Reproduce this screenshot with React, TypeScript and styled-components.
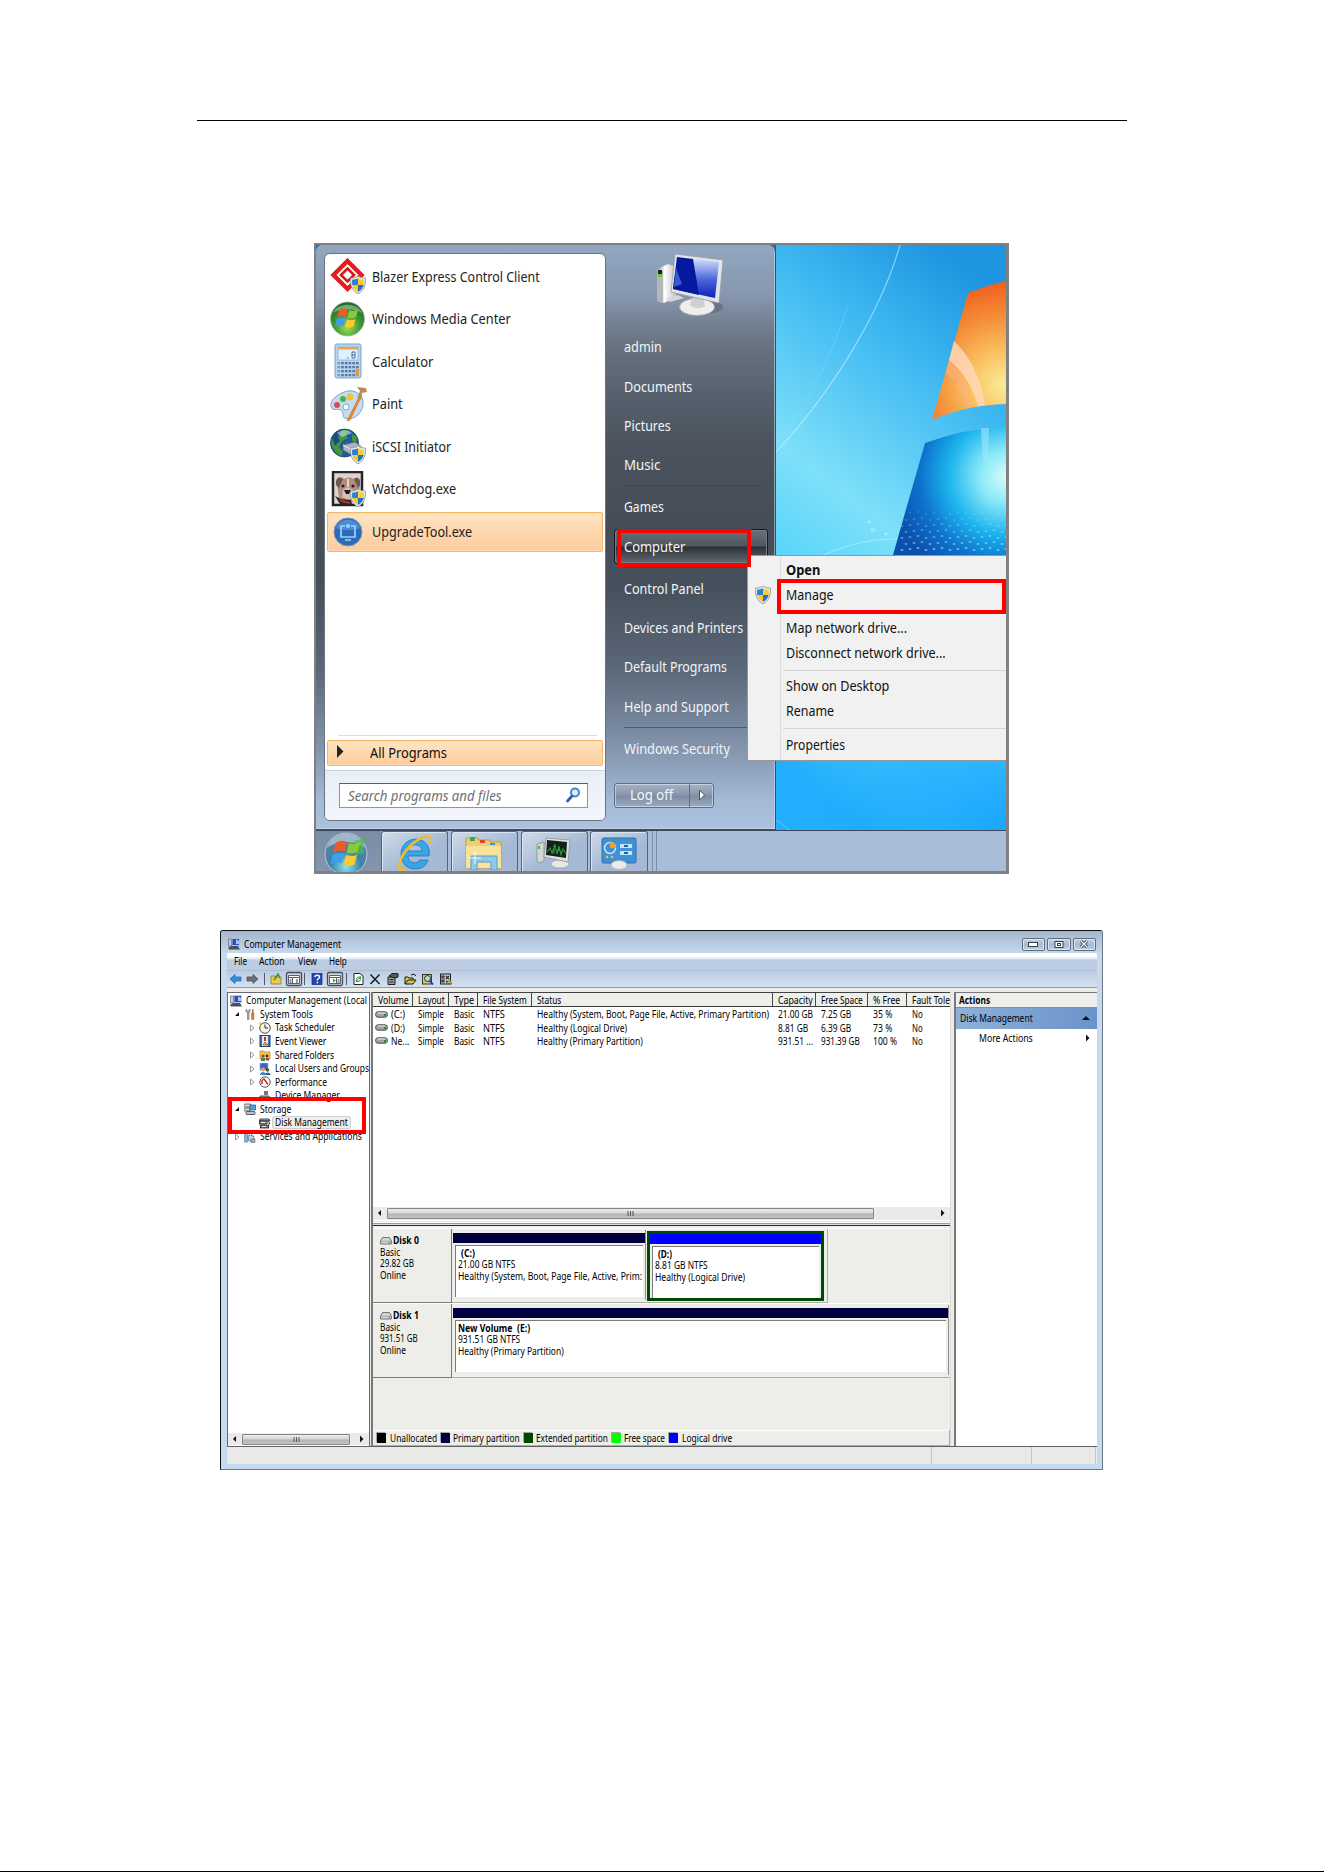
import React, { useLayoutEffect, useRef, useState } from 'react';
import styled, { createGlobalStyle, css } from 'styled-components';

const GlobalStyle = createGlobalStyle`
  * { box-sizing: border-box; }
  body {
    margin: 0;
    background: #fff;
    font-family: 'Noto Sans', 'Open Sans', sans-serif;
    color: #111;
  }
  svg { display: block; flex: none; }
`;

const Page = styled.main`
  width: 1324px;
  height: 1872px;
  display: flex;
  flex-direction: column;
  padding-top: 120px;
  overflow: hidden;
`;

const HeaderRule = styled.div`
  width: 930px;
  height: 1px;
  flex: none;
  margin-left: 197px;
  background: #000;
`;

const FooterRule = styled.div`
  height: 1px;
  margin-top: auto;
  background: #000;
`;

/* ---------- text squeezed to a known width ---------- */

const FitBox = styled.span`
  display: inline-block;
  flex: none;
  white-space: nowrap;
`;

const FitText = styled.span`
  display: inline-block;
  transform-origin: left center;
  white-space: pre;
`;

interface IFitProps {
  w: number;
  children: string;
}

function Fit({ w, children }: IFitProps) {
  const ref = useRef<HTMLSpanElement>(null);
  const [scale, setScale] = useState(1);

  useLayoutEffect(() => {
    if (ref.current) setScale(w / ref.current.offsetWidth);
  }, [w, children]);

  return (
    <FitBox style={{ width: w }}>
      <FitText ref={ref} style={{ transform: `scaleX(${scale})` }}>
        {children}
      </FitText>
    </FitBox>
  );
}

/* ---------- icons ---------- */

interface IIconProps {
  size?: number;
}

function ShieldShape() {
  return (
    <g>
      <path d="M8 0C10 1.4 13 2 15.5 2C16 9 14 14.500 8 18C2 14.500 0 9 .5 2C3 2 6 1.400 8 0Z" fill="#e4e7ea" stroke="#8c9296" strokeWidth=".8" />
      <path d="M8 2.200V9H2.300C2 7 2 5 2.100 3.700C4.500 3.500 6.500 3 8 2.200Z" fill="#2f7fd6" />
      <path d="M8 2.200V9H13.700C14 7 14 5 13.900 3.700C11.500 3.500 9.500 3 8 2.200Z" fill="#fbd02c" />
      <path d="M8 9V16C5 14 3 12 2.300 9Z" fill="#fbc81e" />
      <path d="M8 9V16C11 14 13 12 13.700 9Z" fill="#2370c8" />
    </g>
  );
}

function ShieldIcon() {
  return (
    <svg width="16" height="18" viewBox="0 0 16 18"><ShieldShape /></svg>
  );
}

function FlagShape() {
  return (
    <g>
      <path d="M9 9C12 7 15 7 17.500 8.500L16 16C13 14.500 10 15 7 16.500Z" fill="#f0592a" />
      <path d="M19 9C22 10.500 25 10 28 8.500L26 16C23 17.500 20 17.500 17.500 16.500Z" fill="#8cc83c" />
      <path d="M6.500 18C9.500 16.500 12.500 16.500 15.500 18L13.500 25C11 23.500 8 24 5 25.500Z" fill="#3fa0e8" />
      <path d="M17 18.500C20 19.500 23 19.500 25.500 18L23.500 25.500C21 27 18 27 15 25.500Z" fill="#fccb2c" />
    </g>
  );
}

function BlazerIcon() {
  return (
    <svg width="36" height="36" viewBox="0 0 36 36">
      <path d="M17.500 3L31.500 17L17.500 31L3.500 17Z" fill="none" stroke="#e0201c" strokeWidth="4.400" />
      <path d="M17.500 10.500L24 17L17.500 23.500L11 17Z" fill="none" stroke="#d81818" strokeWidth="2.600" />
      <path d="M17.500 14.500L20 17L17.500 19.500L15 17Z" fill="#fff" />
      <g transform="translate(20 18)"><ShieldShape /></g>
    </svg>
  );
}

function MediaCenterIcon() {
  return (
    <svg width="36" height="36" viewBox="0 0 36 36">
      <defs>
        <radialGradient id="wmc" cx=".5" cy=".75" r=".75">
          <stop offset="0" stopColor="#9be05c" />
          <stop offset=".5" stopColor="#3f9a34" />
          <stop offset="1" stopColor="#1e6425" />
        </radialGradient>
      </defs>
      <circle cx="17.500" cy="18" r="17" fill="url(#wmc)" stroke="#a9b9a9" strokeWidth=".8" />
      <path d="M3 12C7 1 28 1 32 12C24 7 11 7 3 12Z" fill="#fff" opacity=".35" />
      <FlagShape />
    </svg>
  );
}

function CalculatorIcon() {
  const keys = [0, 1, 2, 3, 4, 5];
  return (
    <svg width="36" height="36" viewBox="0 0 36 36">
      <rect x="5" y="1" width="26" height="34" rx="2" fill="#b7d3f0" stroke="#7fa3cb" />
      <rect x="8" y="4" width="20" height="13" fill="#dff0fd" stroke="#88a9cc" strokeWidth=".7" />
      <rect x="8" y="4" width="20" height="2.500" fill="#f0a545" />
      <path d="M22 9H25V15H22ZM22 12H25M17 15H18.500" fill="none" stroke="#4a6f98" strokeWidth="1" />
      {keys.map((k) => [20, 24, 28, 32].map((y) => (
        <rect key={`${k}-${y}`} x={7.5 + k * 3.7} y={y - 1} width="2.600" height="2.300" fill={k === 0 ? '#7f9cbd' : '#56789f'} />
      )))}
      <rect x="25.500" y="26" width="3.500" height="7" fill="#ee9430" />
    </svg>
  );
}

function PaintIcon() {
  return (
    <svg width="38" height="36" viewBox="0 0 38 36">
      <path d="M12 7C21 2 31 6 33 15C34 25 26 35 15 32C11 31 15 26 11 24C7 22 2 26 1 20C0 14 6 10 12 7ZM16 18A3 3 0 1 0 16 24A3 3 0 1 0 16 18Z" fill="#c3dcf2" stroke="#7da4cc" fillRule="evenodd" />
      <circle cx="7" cy="19" r="3" fill="#e04b44" />
      <circle cx="13" cy="13" r="3" fill="#4eb04c" />
      <circle cx="20" cy="11" r="3.500" fill="#f1c330" />
      <path d="M28 13L32 9L20 34L17 35Z" fill="#ef8a2c" stroke="#c9691a" strokeWidth=".6" />
      <path d="M27 12L30 5L27 1L36 2L37 6L32 7L31 14Z" fill="#b98d55" />
    </svg>
  );
}

function GlobeIcon() {
  return (
    <svg width="36" height="36" viewBox="0 0 36 36">
      <circle cx="14.500" cy="15" r="14" fill="#2459a0" stroke="#163f70" strokeWidth=".8" />
      <path d="M5 6C9 1 15 1 19 3L16 7L18 10L12 13L9 19L13 24L11 28C4 25 0 17 2 10ZM22 6L27 9L26 15L22 13Z" fill="#3f9a34" />
      <path d="M2 10C4 5 8 2 12 2L8 9L10 13L5 18Z" fill="#1c4c8c" />
      <path d="M7 5C11 2 17 1 22 5L12 9Z" fill="#dff4ff" opacity=".5" />
      <path d="M13 17L25 14L31 18V24L20 26L13 22Z" fill="#a8b3bc" stroke="#5d6870" strokeWidth=".8" />
      <path d="M13 17L20 21L31 18" fill="none" stroke="#eef2f5" />
      <g transform="translate(20 18)"><ShieldShape /></g>
    </svg>
  );
}

function WatchdogIcon() {
  return (
    <svg width="36" height="36" viewBox="0 0 36 36">
      <rect x="3" y="1" width="29" height="33" fill="#ddd6d0" stroke="#26262a" strokeWidth="2.500" />
      <path d="M7 12C6 5 12 5 14 8C18 6 22 6 23 8C27 5 31 8 30 14L28 26L20 31L9 28Z" fill="#b08d7e" />
      <path d="M6 14C5 7 9 5 13 8L9 17ZM30 14C31 7 27 5 24 8L28 17Z" fill="#71564c" />
      <path d="M13 19L17 16L23 19V27L18 29L12 26Z" fill="#d9bfb2" />
      <path d="M17 8L19 8L19 16L17 16Z" fill="#e4d0c6" />
      <circle cx="13" cy="15" r="1.600" fill="#222" />
      <circle cx="23" cy="15" r="1.600" fill="#222" />
      <path d="M14 19H21L19 23H16Z" fill="#1b1b1d" />
      <path d="M5 25L10 33H22L21 29L11 28Z" fill="#26262b" />
      <path d="M9 28L20 31V33L11 31Z" fill="#c02c2c" />
      <g transform="translate(20 18)"><ShieldShape /></g>
    </svg>
  );
}

function UpgradeIcon() {
  return (
    <svg width="36" height="36" viewBox="0 0 36 36">
      <circle cx="18" cy="18" r="14" fill="#2a6ab6" stroke="#7c98b8" strokeWidth="1" />
      <path d="M6 14C9 3 27 3 30 14C23 17 13 17 6 14Z" fill="#5b9de0" opacity=".7" />
      <path d="M15 12H11V23H25V12H21M15 26H21" fill="none" stroke="#9bd2ff" strokeWidth="1.700" />
      <circle cx="18" cy="12" r="2" fill="#9bd2ff" />
    </svg>
  );
}

function SearchIcon() {
  return (
    <svg width="15" height="16" viewBox="0 0 15 16">
      <circle cx="9" cy="5.500" r="4" fill="#dcebfa" stroke="#4585c6" strokeWidth="2" />
      <path d="M6 9L1.500 14" stroke="#2b64ab" strokeWidth="2.800" strokeLinecap="round" />
    </svg>
  );
}

function ComputerPicture() {
  return (
    <svg width="68" height="63" viewBox="0 0 68 63">
      <defs>
        <linearGradient id="scr" x1="0" y1="1" x2="0" y2="0">
          <stop offset="0" stopColor="#0c22b8" />
          <stop offset=".45" stopColor="#4a66dc" />
          <stop offset="1" stopColor="#dde9ff" />
        </linearGradient>
        <linearGradient id="tower" x1="0" x2="1">
          <stop offset="0" stopColor="#8e8e8e" />
          <stop offset=".4" stopColor="#fff" />
          <stop offset="1" stopColor="#c2c2c2" />
        </linearGradient>
      </defs>
      <ellipse cx="50" cy="53" rx="17" ry="7" fill="#4e5c6e" opacity=".5" />
      <path d="M1 15L12 10L20 13V43L8 49L1 47Z" fill="url(#tower)" />
      <path d="M1 15L7 17V49L1 47Z" fill="#b4b7b8" />
      <rect x="2" y="16" width="4" height="5" fill="#222" />
      <rect x="2" y="20" width="4" height="3" fill="#58d026" />
      <path d="M10 45L22 41L28 44L14 48Z" fill="#d6d6d6" />
      <ellipse cx="41" cy="53" rx="17.500" ry="8.500" fill="#eee" stroke="#aaa" strokeWidth=".8" />
      <path d="M36 44H47L49 52C45 55 38 55 34 51Z" fill="#cfcfcf" />
      <path d="M19 0L67 6L63 49L15 38Z" fill="#e2e5e6" stroke="#9a9fa4" strokeWidth=".8" />
      <path d="M21 3L63 8L59 44L17 35Z" fill="url(#scr)" />
      <path d="M21 3L37 5L43 41L17 35Z" fill="#0618a0" />
      <path d="M20 14L26 30L18 33Z" fill="#5276e0" opacity=".7" />
    </svg>
  );
}

function Wallpaper() {
  const dots: React.ReactElement[] = [];
  for (let r = 0; r < 7; r += 1) {
    for (let c = 0; c < 14; c += 1) {
      dots.push(<ellipse key={`${r}-${c}`} cx={126 + c * 8 + (r % 2) * 4} cy={269 + r * 6 - (c % 3)} rx="1.500" ry="1" fill="#bdeaff" opacity={0.15 + r * 0.07} />);
    }
  }
  return (
    <svg width="230" height="585" viewBox="0 0 230 585">
      <defs>
        <linearGradient id="sky" x1=".7" y1="0" x2=".4" y2="1">
          <stop offset="0" stopColor="#1f94e0" />
          <stop offset=".2" stopColor="#3db7f1" />
          <stop offset=".36" stopColor="#5fcdf6" />
          <stop offset=".5" stopColor="#7ee0f9" />
          <stop offset=".72" stopColor="#4fd2fb" />
          <stop offset="1" stopColor="#22aefc" />
        </linearGradient>
        <radialGradient id="orange" gradientUnits="userSpaceOnUse" cx="228" cy="140" r="115">
          <stop offset="0" stopColor="#fbec98" />
          <stop offset=".3" stopColor="#f9c060" />
          <stop offset=".62" stopColor="#f58a35" />
          <stop offset="1" stopColor="#ef4e16" />
        </radialGradient>
        <radialGradient id="blue" gradientUnits="userSpaceOnUse" cx="230" cy="232" r="115">
          <stop offset="0" stopColor="#d9fbfb" />
          <stop offset=".22" stopColor="#8ceaf8" />
          <stop offset=".5" stopColor="#1cb4ee" />
          <stop offset=".75" stopColor="#0d72cc" />
          <stop offset="1" stopColor="#0a50ac" />
        </radialGradient>
        <radialGradient id="corner" gradientUnits="userSpaceOnUse" cx="230" cy="585" r="180">
          <stop offset="0" stopColor="#1ba6ff" />
          <stop offset="1" stopColor="#1ba6ff" stopOpacity="0" />
        </radialGradient>
      </defs>
      <rect width="230" height="585" fill="url(#sky)" />
      <rect y="400" width="230" height="185" fill="url(#corner)" />
      <path d="M124 0C108 56 66 136 0 207" fill="none" stroke="#c9f0fd" strokeWidth="1.200" opacity=".6" />
      <path d="M72 60C56 110 30 165 0 198" fill="none" stroke="#b4e8fc" strokeWidth=".8" opacity=".3" />
      <path d="M0 575L14 585" stroke="#9be8ff" opacity=".5" />
      <path d="M45 311C75 298 100 293 125 294" fill="none" stroke="#b8effc" strokeWidth="1" opacity=".7" />
      <path d="M192 48Q212 40 230 36V159Q190 160 156 175Z" fill="url(#orange)" />
      <path d="M178 96Q203 120 209 160L202 161Q194 132 173 115Z" fill="#ffd9bd" opacity=".8" />
      <path d="M173 115Q192 132 197 162L190 163Q185 142 170 128Z" fill="#fbb37c" opacity=".6" />
      <path d="M149 198Q190 183 230 182V310H117Z" fill="url(#blue)" />
      <path d="M205 183H213L212 220L207 215Z" fill="#9fe6fb" opacity=".6" />
      {dots}
      <circle cx="93" cy="277" r="1.500" fill="#b7effc" opacity=".8" />
      <circle cx="97" cy="285" r="2.500" fill="#a3e9fc" opacity=".8" />
      <circle cx="110" cy="289" r="1.600" fill="#b7effc" opacity=".8" />
    </svg>
  );
}

function OrbIcon() {
  return (
    <svg width="46" height="41" viewBox="0 0 46 41">
      <defs>
        <radialGradient id="orb" cx=".5" cy=".8" r=".8">
          <stop offset="0" stopColor="#8fe4f4" />
          <stop offset=".45" stopColor="#3c83a8" />
          <stop offset="1" stopColor="#6d8299" />
        </radialGradient>
      </defs>
      <circle cx="22" cy="23" r="21" fill="url(#orb)" stroke="#c5d4e2" strokeWidth=".8" />
      <path d="M3 17C8 -2 36 -2 41 17C31 9 13 9 3 17Z" fill="#e0edf5" opacity=".5" />
      <path d="M30 10L44 6L39 14L40 22L32 24Z" fill="#4cbc4e" opacity=".7" />
      <g transform="translate(0 0) scale(1.300)"><FlagShape /></g>
    </svg>
  );
}

function IeIcon() {
  return (
    <svg width="36" height="38" viewBox="0 0 36 38">
      <path d="M31 26H23C18 32 11 28 11 22H32C34 12 27 5 19 5C10 5 4 12 4 20C4 29 10 35 18 35C25 35 29 32 31 26ZM11 17C12 9 25 9 25 17Z" fill="#39a4e6" stroke="#1b76bd" strokeWidth=".8" />
      <path d="M33 10C35 5 33 1 27 3C18 6 6 17 3 28C1 34 3 37 8 35" fill="none" stroke="#f4b92c" strokeWidth="2.600" />
    </svg>
  );
}

function FolderIcon() {
  return (
    <svg width="38" height="34" viewBox="0 0 38 34">
      <path d="M1 8V2H13V4H25V6H36V32H1Z" fill="#efce78" stroke="#c69a3c" />
      <path d="M5 1H10V5H5Z" fill="#3fa84d" />
      <path d="M15 4H20V7H15Z" fill="#d64b2c" />
      <path d="M25 7H30V9H25Z" fill="#3597d8" />
      <path d="M1 10H36V32H1Z" fill="#f9e29c" />
      <path d="M6 34V20H32V34H26V26H12V34Z" fill="#8ccbee" stroke="#4e9fce" />
      <path d="M10 16V28M4 22H16" stroke="#fff" strokeWidth="1" opacity=".9" />
    </svg>
  );
}

function MonitorIcon() {
  return (
    <svg width="36" height="32" viewBox="0 0 36 32">
      <path d="M1 7L8 5V24L3 26L1 24Z" fill="#d4d6d6" stroke="#7d8488" strokeWidth=".7" />
      <rect x="2" y="9" width="2" height="3" fill="#3bbf35" />
      <ellipse cx="24" cy="27" rx="9" ry="4" fill="#e7e9e9" stroke="#9b9fa2" strokeWidth=".6" />
      <path d="M10 1L34 3L32 25L8 20Z" fill="#dfe2e3" stroke="#858a8e" strokeWidth=".7" />
      <path d="M11 3L31 5L30 21L10 18Z" fill="#16201a" />
      <path d="M11 15L14 11L16 16L19 8L21 17L23 9L25 18L27 12L30 17M18 8V17M22 12L25 15" fill="none" stroke="#2a9c38" strokeWidth="1.100" />
    </svg>
  );
}

function PanelIcon() {
  return (
    <svg width="36" height="33" viewBox="0 0 36 33">
      <rect x="1" y="1" width="34" height="25" rx="1.500" fill="#3f91d4" stroke="#2a6fae" />
      <circle cx="9" cy="11" r="5.500" fill="none" stroke="#c5e2f8" strokeWidth="1.500" />
      <path d="M9 11V5A6 6 0 0 1 15 11Z" fill="#f59a2e" />
      <rect x="19" y="7" width="12" height="4" fill="#bfe4fb" />
      <rect x="19" y="14" width="12" height="4" fill="#bfe4fb" />
      <path d="M23 9H27M23 16H27" stroke="#1c63a8" strokeWidth="2" />
      <circle cx="6" cy="20" r="1.300" fill="#f7b44a" />
      <circle cx="11" cy="20" r="1.300" fill="#f7b44a" />
      <ellipse cx="18" cy="28" rx="8" ry="4.500" fill="#e8eaeb" stroke="#a4a8ab" strokeWidth=".7" />
    </svg>
  );
}

function ConsoleIcon({ size = 12 }: IIconProps) {
  return (
    <svg width={size} height={size} viewBox="0 0 12 12">
      <rect x="4" y=".5" width="7.500" height="7" fill="#2b4fc0" stroke="#c3ccd8" strokeWidth=".8" />
      <path d="M8 1.200L11 3V6H8Z" fill="#a8c8ff" />
      <rect x=".5" y="1" width="3" height="7" fill="#c8ccd0" stroke="#445" strokeWidth=".5" />
      <path d="M0 10L3 8H10L12 11.500H1Z" fill="#4a505a" />
    </svg>
  );
}

function ToolsIcon() {
  return (
    <svg width="12" height="12" viewBox="0 0 12 12">
      <path d="M2 1V3.500L3.500 5V11.500H5V5L6 3.500V1L5 3H3Z" fill="#a8adb2" stroke="#555" strokeWidth=".5" />
      <path d="M8 1H9.500V5H8Z" fill="#888" />
      <path d="M7.500 5H10V11.500H7.500Z" fill="#f07c28" stroke="#b04a10" strokeWidth=".4" />
    </svg>
  );
}

function ClockIcon() {
  return (
    <svg width="12" height="12" viewBox="0 0 12 12">
      <circle cx="6" cy="6" r="5.300" fill="#f4f1e4" stroke="#4d5258" strokeWidth="1" />
      <path d="M6 2.500V6H9" fill="none" stroke="#333" />
      <path d="M0 2L2 0V4Z" fill="#e7ac38" />
    </svg>
  );
}

function EventIcon() {
  return (
    <svg width="12" height="12" viewBox="0 0 12 12">
      <rect x="1" y=".5" width="10" height="11" fill="#3b6fc0" stroke="#26406c" />
      <rect x="3" y="1" width="6" height="10" fill="#e8edf5" />
      <path d="M5 2H7V6H5Z" fill="#d22" />
      <path d="M4 10L6 7L9 10Z" fill="#f0b020" stroke="#333" strokeWidth=".5" />
    </svg>
  );
}

function SharedIcon() {
  return (
    <svg width="12" height="12" viewBox="0 0 12 12">
      <path d="M1 2H5L6 3H11V10H1Z" fill="#f2c74c" stroke="#b48520" strokeWidth=".7" />
      <circle cx="4" cy="7" r="1.500" fill="#7a4a28" />
      <path d="M2 12V9H6V12Z" fill="#2f8c50" />
      <circle cx="8" cy="7" r="1.400" fill="#333" />
      <path d="M7 11.500V9H10V11.500Z" fill="#b33c3c" />
    </svg>
  );
}

function UsersIcon() {
  return (
    <svg width="12" height="12" viewBox="0 0 12 12">
      <rect x="1" y="0" width="8" height="7" fill="#3a62c8" stroke="#9fb0c8" strokeWidth=".7" />
      <circle cx="4" cy="6.500" r="2" fill="#dca860" />
      <path d="M1 12C1 8 7 8 7 12Z" fill="#3e8cc0" />
      <circle cx="8.500" cy="7" r="1.700" fill="#62452c" />
      <path d="M6 12C6 8.500 11.500 8.500 11.500 12Z" fill="#2d5f90" />
    </svg>
  );
}

function PerfIcon() {
  return (
    <svg width="12" height="12" viewBox="0 0 12 12">
      <circle cx="6" cy="6" r="5.200" fill="#fff" stroke="#555" strokeWidth="1" />
      <path d="M3 8V4.500L5 3L9 8.500" fill="none" stroke="#d11f1f" strokeWidth="1.400" />
    </svg>
  );
}

function DeviceIcon() {
  return (
    <svg width="12" height="12" viewBox="0 0 12 12">
      <path d="M5 1H9V5H5Z" fill="#777" />
      <path d="M1 6H10L11 10H1Z" fill="#9aa0a6" stroke="#333" strokeWidth=".8" />
    </svg>
  );
}

function StorageIcon() {
  return (
    <svg width="12" height="12" viewBox="0 0 12 12">
      <rect x="0" y="1" width="7" height="3" rx="1" fill="#d8dbde" stroke="#4a4e52" strokeWidth=".8" />
      <rect x="0" y="5" width="6" height="3" rx="1" fill="#d8dbde" stroke="#4a4e52" strokeWidth=".8" />
      <rect x="6" y="2" width="5.500" height="5" fill="#45a6e4" stroke="#24506e" strokeWidth=".7" />
      <rect x="2" y="8.500" width="9" height="3" rx="1" fill="#bcc2c8" stroke="#3b3f43" strokeWidth=".8" />
    </svg>
  );
}

function DiskMgmtIcon() {
  return (
    <svg width="12" height="12" viewBox="0 0 12 12">
      <path d="M1 2H10L11 4H.5Z" fill="#b4b8ba" stroke="#222" strokeWidth=".8" />
      <rect x=".5" y="4" width="10" height="3" fill="#888d90" stroke="#1d1d1d" strokeWidth=".8" />
      <rect x="1.500" y="8" width="8" height="3" fill="#777c80" stroke="#1d1d1d" strokeWidth=".8" />
      <path d="M2 5.500H6M3 9.500H7M8 8L11 4" stroke="#e7e9ea" strokeWidth="1" />
    </svg>
  );
}

function ServicesIcon() {
  return (
    <svg width="12" height="12" viewBox="0 0 12 12">
      <rect x="0" y="1" width="4" height="10" fill="#86b6d8" stroke="#4e7fa2" strokeWidth=".6" />
      <circle cx="7" cy="7" r="3" fill="#c3d3e0" stroke="#587187" strokeWidth="1.300" strokeDasharray="1.500 .8" />
      <rect x="7" y="8" width="4" height="3.500" fill="#9ab" stroke="#567" strokeWidth=".5" />
    </svg>
  );
}

function VolumeIcon() {
  return (
    <svg width="13" height="7" viewBox="0 0 13 7">
      <rect x=".6" y=".8" width="11.800" height="5.400" rx="2.400" fill="#9fa3a2" stroke="#4a4e4d" strokeWidth="1" />
      <path d="M2.500 2H10.500" stroke="#eee" />
      <rect x="9" y="3" width="2" height="2" fill="#1d8f2a" />
    </svg>
  );
}

function DiskIcon() {
  return (
    <svg width="12" height="8" viewBox="0 0 12 8">
      <path d="M2.500 .6H9.500L11.400 4V7H.6V4Z" fill="#d7d9d7" stroke="#5e6260" strokeWidth=".9" />
      <path d="M.6 4.200H11.400" stroke="#8d918f" strokeWidth=".7" />
      <rect x="8.500" y="5" width="1.500" height="1" fill="#2a2" />
    </svg>
  );
}

/* ---------- start menu ---------- */

const Desktop = styled.section`
  position: relative;
  width: 695px;
  height: 631px;
  flex: none;
  margin: 122px 0 0 314px;
  border: solid #808080;
  border-width: 2px 3px 3px 2px;
  display: grid;
  grid-template-rows: 585px 41px;
`;

const Scene = styled.div`
  display: flex;
  background: #1c68b4;
`;

const StartMenu = styled.div`
  width: 460px;
  height: 585px;
  display: flex;
  padding: 8px 0 0 8px;
  border: solid #3f4e60;
  border-width: 0 1px 1px 0;
  border-radius: 6px 7px 0 0;
  box-shadow: inset -1px -1px 0 rgba(205, 220, 238, 0.55);
  background: linear-gradient(#92a7c2 0, #8797ae 50px, #738092 80px, #66717e 105px, #56616d 150px,
    #4b545e 200px, #454d57 280px, #46505c 340px, #5b6878 425px, #8192aa 500px, #a4b9d6 555px, #acc2df 585px);
`;

const ProgramPane = styled.div`
  width: 282px;
  height: 568px;
  display: flex;
  flex-direction: column;
  border: 1px solid #69747f;
  border-radius: 6px;
  overflow: hidden;
  background: #fff;
`;

const ProgramList = styled.div`
  height: 481px;
  padding: 2px 2px 0;
`;

const warmBar = css`
  border: 1px solid #f3b568;
  border-radius: 2px;
  box-shadow: inset 0 0 0 1px #fddcb2;
  background: linear-gradient(#ffe5c3, #fdcb9b);
`;

const Program = styled.div<{ $active?: boolean }>`
  height: 40px;
  margin-bottom: 2.6px;
  display: flex;
  align-items: center;
  gap: 6px;
  padding-left: 2px;
  border: 1px solid transparent;
  font-size: 14px;
  color: #222;
  ${({ $active }) => $active && warmBar}
`;

const ProgramIcon = styled.span`
  width: 36px;
  height: 36px;
`;

const PaneRule = styled.div`
  height: 1px;
  margin: 0 8px 4px 13px;
  background: #cfdfee;
`;

const AllPrograms = styled.div`
  height: 26px;
  flex: none;
  margin: 0 2px;
  display: flex;
  align-items: center;
  gap: 26px;
  padding: 0 0 2px 8px;
  font-size: 14px;
  ${warmBar}
`;

const SearchPane = styled.div`
  height: 50px;
  margin-top: auto;
  flex: none;
  border-top: 1px solid #c9d3df;
  background: linear-gradient(#e9eff8, #f2f5fb);
  padding: 12px 0 0 14px;
`;

const SearchBox = styled.div`
  width: 249px;
  height: 25px;
  display: flex;
  align-items: center;
  justify-content: space-between;
  padding: 0 6px 1px 8px;
  border: 1px solid #8b97a4;
  border-top-color: #565f69;
  background: #fff;
  font-size: 14px;
  font-style: italic;
  color: #6d7074;
`;

const PlacesPane = styled.div`
  flex: 1;
  display: flex;
  flex-direction: column;
  padding-left: 8px;
`;

const Portrait = styled.div`
  height: 74.3px;
  flex: none;
  padding: 1px 0 0 42px;
`;

const Place = styled.div<{ $active?: boolean }>`
  height: 39.2px;
  flex: none;
  display: flex;
  align-items: center;
  margin-right: 7px;
  padding-left: 10px;
  color: #f2f5f8;
  font-size: 14px;
  ${({ $active }) => $active && css`
    height: 35px;
    margin-top: 2.7px;
    margin-bottom: 1.5px;
    border: 1px solid #15191e;
    border-radius: 3px;
    padding-left: 9px;
    box-shadow: inset 0 0 0 1px #757d86;
    background: linear-gradient(#68717b, #4f565f 48%, #2c3137 52%, #626a73);
  `}
`;

const PlaceRule = styled.div`
  height: 3.3px;
  flex: none;
  margin: 0 12px 0 10px;
  padding-top: 1px;

  &::before {
    content: '';
    display: block;
    height: 1px;
    background: #343e49;
    opacity: 0.6;
  }
`;

const LogOff = styled.div`
  display: flex;
  width: 100px;
  height: 25px;
  margin-top: 14.5px;
  border: 1px solid #5f6e80;
  border-radius: 3px;
  background: linear-gradient(#a5b3c6, #8797ab 48%, #7a8ba2 52%, #9aacc4);
  box-shadow: inset 0 0 0 1px rgba(230, 238, 247, 0.55);
  font-size: 14px;
  color: #f5f7fa;
`;

const LogOffText = styled.span`
  width: 75px;
  padding: 1px 0 0 15px;
  border-right: 1px solid #5f6e80;
`;

const LogOffArrow = styled.span`
  flex: 1;
  display: grid;
  place-items: center;
`;

const Taskbar = styled.div`
  display: flex;
  border-top: 1px solid #3b4857;
  background: #a8bdd9;
`;

const StartOrb = styled.div`
  width: 65px;
  padding-left: 8px;
  background: linear-gradient(#7b8da4, #8496ad);
`;

const Task = styled.div<{ $w?: number }>`
  width: ${({ $w = 67 }) => $w}px;
  margin-right: 2.8px;
  height: 40px;
  display: flex;
  justify-content: center;
  align-items: center;
  padding-top: 3px;
  border: 1px solid #54657a;
  border-bottom: 0;
  border-radius: 3px 3px 0 0;
  box-shadow: inset 1px 1px 0 #dce6f2;
  background: linear-gradient(150deg, #cedbea, #a5b9d4 60%);
`;

const TaskEnd = styled.div`
  width: 5px;
  margin-left: 1px;
  border: solid #7b8ca3;
  border-width: 0 1px;
`;

const ContextMenu = styled.div`
  position: absolute;
  left: 431px;
  top: 310px;
  width: 259px;
  height: 206px;
  display: flex;
  border: 1px solid #979797;
  border-right: 0;
  background: #f1f1f1;
  font-size: 14px;
  color: #111;
`;

const MenuGutter = styled.div`
  width: 33px;
  padding: 30px 0 0 6.5px;
  border-right: 1px solid #dcdcdc;
`;

const MenuItems = styled.div`
  flex: 1;
  padding: 2.500px 0 0 2px;
`;

const MenuItem = styled.div<{ $bold?: boolean }>`
  height: 24.6px;
  padding: 0 0 2px 3px;
  display: flex;
  align-items: center;
  font-weight: ${({ $bold }) => ($bold ? 700 : 400)};
`;

const MenuRule = styled.div`
  height: 1px;
  margin: 4px 0 3.9px;
  background: #d5d5d5;
`;

const Marker = styled.div<{ $x: number; $y: number; $w: number; $h: number }>`
  position: absolute;
  left: ${({ $x }) => $x}px;
  top: ${({ $y }) => $y}px;
  width: ${({ $w }) => $w}px;
  height: ${({ $h }) => $h}px;
  border: 4px solid #fe0000;
`;

const programs = [
  { name: 'Blazer Express Control Client', w: 168, icon: <BlazerIcon /> },
  { name: 'Windows Media Center', w: 139, icon: <MediaCenterIcon /> },
  { name: 'Calculator', w: 61, icon: <CalculatorIcon /> },
  { name: 'Paint', w: 31, icon: <PaintIcon /> },
  { name: 'iSCSI Initiator', w: 79, icon: <GlobeIcon /> },
  { name: 'Watchdog.exe', w: 84, icon: <WatchdogIcon /> },
  { name: 'UpgradeTool.exe', w: 100, icon: <UpgradeIcon />, active: true },
];

const places = [
  { name: 'admin', w: 38 },
  { name: 'Documents', w: 68 },
  { name: 'Pictures', w: 47 },
  { name: 'Music', w: 36 },
  null,
  { name: 'Games', w: 40 },
  { name: 'Computer', w: 61, active: true },
  null,
  { name: 'Control Panel', w: 80 },
  { name: 'Devices and Printers', w: 119 },
  { name: 'Default Programs', w: 103 },
  { name: 'Help and Support', w: 105 },
  null,
  { name: 'Windows Security', w: 106 },
];

const menuItems = [
  { name: 'Open', w: 34, bold: true },
  { name: 'Manage', w: 48 },
  null,
  { name: 'Map network drive...', w: 121 },
  { name: 'Disconnect network drive...', w: 160 },
  null,
  { name: 'Show on Desktop', w: 103 },
  { name: 'Rename', w: 48 },
  null,
  { name: 'Properties', w: 59 },
];

function StartMenuShot() {
  return (
    <Desktop>
      <Scene>
        <StartMenu>
          <ProgramPane>
            <ProgramList>
              {programs.map((p) => (
                <Program key={p.name} $active={p.active}>
                  <ProgramIcon>{p.icon}</ProgramIcon>
                  <Fit w={p.w}>{p.name}</Fit>
                </Program>
              ))}
            </ProgramList>
            <PaneRule />
            <AllPrograms>
              <svg width="8" height="14" viewBox="0 0 8 14"><path d="M1 0L7.500 6.500L1 13Z" fill="#222" /></svg>
              <Fit w={77}>All Programs</Fit>
            </AllPrograms>
            <SearchPane>
              <SearchBox>
                <Fit w={153}>Search programs and files</Fit>
                <SearchIcon />
              </SearchBox>
            </SearchPane>
          </ProgramPane>
          <PlacesPane>
            <Portrait><ComputerPicture /></Portrait>
            {places.map((p, i) => (p ? (
              <Place key={p.name} $active={p.active}>
                <Fit w={p.w}>{p.name}</Fit>
              </Place>
            ) : <PlaceRule key={`rule-${i}`} />))}
            <LogOff>
              <LogOffText><Fit w={43}>Log off</Fit></LogOffText>
              <LogOffArrow>
                <svg width="8" height="12" viewBox="0 0 8 12"><path d="M1.500 1L6.500 6L1.500 11Z" fill="#fff" stroke="#46525f" /></svg>
              </LogOffArrow>
            </LogOff>
          </PlacesPane>
        </StartMenu>
        <Wallpaper />
      </Scene>
      <Taskbar>
        <StartOrb><OrbIcon /></StartOrb>
        <Task><IeIcon /></Task>
        <Task><FolderIcon /></Task>
        <Task><MonitorIcon /></Task>
        <Task $w={58}><PanelIcon /></Task>
        <TaskEnd />
      </Taskbar>
      <ContextMenu>
        <MenuGutter><ShieldIcon /></MenuGutter>
        <MenuItems>
          {menuItems.map((m, i) => (m ? (
            <MenuItem key={m.name} $bold={m.bold}><Fit w={m.w}>{m.name}</Fit></MenuItem>
          ) : <MenuRule key={`rule-${i}`} />))}
        </MenuItems>
      </ContextMenu>
      <Marker $x={301} $y={284} $w={134} $h={38} />
      <Marker $x={461} $y={334} $w={229} $h={35} />
    </Desktop>
  );
}

/* ---------- computer management ---------- */

const Win = styled.section`
  position: relative;
  width: 883px;
  height: 540px;
  flex: none;
  margin: 56px 0 0 220px;
  padding: 0 5px 5px 6px;
  border: 1px solid #101418;
  border-right-color: #6d7680;
  border-bottom-color: #6d7680;
  border-radius: 3px 3px 0 0;
  background: #c6d9ee;
  display: flex;
  flex-direction: column;
  font-size: 10px;
  color: #000;
`;

const TitleBar = styled.div`
  height: 22px;
  margin: 0 -5px 0 -6px;
  padding: 5px 6px 0 7px;
  display: flex;
  align-items: center;
  gap: 3.5px;
  border-radius: 3px 3px 0 0;
  background: linear-gradient(#a3b5ca, #b5c8df 50%, #c6d8ec);
`;

const WinButtons = styled.div`
  display: flex;
  gap: 2px;
  margin-left: auto;
`;

const WinButton = styled.div`
  width: 23.5px;
  height: 13px;
  display: grid;
  place-items: center;
  border: 1px solid #5e6c7d;
  border-radius: 2px;
  box-shadow: inset 0 0 0 1px #dbe6f2;
  background: linear-gradient(#c3d2e4, #a9bbd0 50%, #bccde0);
`;

const MenuBar = styled.div`
  height: 17px;
  display: flex;
  align-items: center;
  padding-left: 7px;
  background: linear-gradient(#fff 0, #fff 3px, #dde6f3 6px, #bccce3 7px);
`;

const MenuName = styled.span<{ $w: number }>`
  width: ${({ $w }) => $w}px;
`;

const ToolBar = styled.div`
  height: 18px;
  display: flex;
  align-items: center;
  padding-left: 3px;
  border-top: 1px solid #b0bed4;
  border-bottom: 1px solid #8d9cb0;
  background: linear-gradient(#bccce4, #d3e0f0);
`;

const Panes = styled.div`
  height: 459px;
  display: flex;
  padding-top: 4px;
  background: #ecede9;
`;

const TreePane = styled.div`
  width: 143px;
  display: flex;
  flex-direction: column;
  padding-top: 1px;
  overflow: hidden;
  border: solid #666b70;
  border-width: 1px 1px 0 1px;
  background: #fff;
`;

const TreeRow = styled.div<{ $indent: number }>`
  height: 13.59px;
  flex: none;
  display: flex;
  align-items: center;
  padding-left: ${({ $indent }) => $indent}px;
`;

const Twisty = styled.span`
  width: 11px;
  flex: none;
`;

const TreeText = styled.span<{ $selected?: boolean }>`
  margin-left: 2px;
  padding: 0 2px;
  line-height: 11px;
  ${({ $selected }) => $selected && css`
    border-radius: 2px;
    box-shadow: 0 0 0 1px #cfcfcf;
    background: #efefef;
  `}
`;

const ScrollBar = styled.div`
  height: 12px;
  flex: none;
  display: flex;
  align-items: center;
  gap: 3px;
  padding: 0 3px;
  background: #eaeaea;
`;

const TreeFoot = styled(ScrollBar)`
  margin-top: auto;
  margin-bottom: 1px;
`;

const TableScroll = styled(ScrollBar)`
  height: 13px;
`;

const ScrollEnd = styled.span`
  margin-left: auto;
`;

const Thumb = styled.div<{ $w: number }>`
  width: ${({ $w }) => $w}px;
  height: 11px;
  display: grid;
  place-items: center;
  border: 1px solid #858585;
  border-radius: 1px;
  background: linear-gradient(#ececec, #d6d6d6 48%, #b3b3b3 52%, #c4c4c4);
`;

const MiddlePane = styled.div`
  width: 580px;
  display: flex;
  flex-direction: column;
  margin-left: 1px;
  border-left: 2px solid #77797b;
  border-right: 1px solid #d9d9d6;
`;

const Table = styled.div`
  height: 215px;
  border-top: 1px solid #3f4143;
  background: #fff;
`;

const columns = '40px 36px 29px 54px 241px 43px 52px 39px 43px';

const HeadRow = styled.div`
  height: 14.5px;
  display: grid;
  grid-template-columns: ${columns};
  border-bottom: 1px solid #3b3b3b;
  background: #eeeeea;
`;

const HeadCell = styled.div`
  display: flex;
  align-items: center;
  padding-left: 5px;
  overflow: hidden;
  border-right: 1px solid #444;

  &:last-child { border-right: 0; }
`;

const Row = styled.div`
  height: 13.1px;
  display: grid;
  grid-template-columns: ${columns};
`;

const Cell = styled.div<{ $pad?: number }>`
  display: flex;
  align-items: center;
  gap: 3px;
  padding-left: ${({ $pad = 5 }) => $pad}px;
`;

const Divider = styled.div`
  height: 6px;
  flex: none;
  border-top: 1px solid #fff;
  border-bottom: 1px solid #2c2c2c;
  background: linear-gradient(#e8e8e6 0 1px, #fff 1px 2px, #9a9a98 2px 3px, #dcdcda 3px);
`;

const Disks = styled.div`
  flex: 1;
  padding-top: 2.5px;
  background: #edeee9;
`;

const Disk = styled.div`
  height: 75px;
  display: flex;
  border-top: 1px solid #fff;
`;

const DiskLabel = styled.div`
  width: 79px;
  padding: 5.5px 0 0 7px;
  line-height: 11.6px;
  border: solid #77797b;
  border-width: 0 1px 1px 0;
`;

const DiskName = styled.div`
  display: flex;
  align-items: center;
  gap: 0.5px;
  font-weight: 700;
`;

const Strip = styled.div<{ $w?: number }>`
  display: flex;
  width: ${({ $w }) => ($w ? `${$w}px` : 'auto')};
  ${({ $w }) => !$w && css`flex: 1;`}
  padding: 1px 0 0 1px;
  border: solid #aeaeaa;
  border-width: 0 ${({ $w }) => ($w ? 1 : 0)}px 1px 0;
`;

const Partition = styled.div<{ $w: number; $color: string; $logical?: boolean }>`
  width: ${({ $w }) => $w}px;
  height: 70px;
  flex: none;
  padding: 3px 0;
  border-right: 1px solid #8e8e8b;

  &::before {
    content: '';
    display: block;
    height: 10px;
    background: ${({ $color }) => $color};
  }

  ${({ $logical }) => $logical && css`
    margin: 1px 0 0 1px;
    height: 70px;
    padding: 0;
    border: 3px solid #004a00;
  `}
`;

const PartitionBody = styled.div`
  height: 52px;
  margin: 2px 2px 0;
  padding: 1.5px 0 0 2px;
  line-height: 11.5px;
  overflow: hidden;
  border: solid #7b7b79;
  border-width: 1px 0 0 1px;
  background: #fff;

  b { display: block; }
  div { white-space: nowrap; }
`;

const Legend = styled.div`
  height: 16px;
  flex: none;
  display: flex;
  align-items: center;
  gap: 4px;
  padding-left: 4px;
  border: solid #aeaeaa;
  border-width: 0 1px 1px 0;
  box-shadow: inset 0 1px 0 #fff;
  background: #edeee9;
`;

const LegendItem = styled.span<{ $color: string }>`
  display: flex;
  align-items: center;
  gap: 3.5px;

  &::before {
    content: '';
    width: 9px;
    height: 10px;
    background: ${({ $color }) => $color};
    box-shadow: -1px -1px 0 #a5a5a2;
  }
`;

const ActionsPane = styled.div`
  flex: 1;
  margin-left: 3px;
  border: solid #77797b;
  border-width: 1px 0 0 2px;
  background: #fff;
`;

const ActionsHead = styled.div`
  height: 15px;
  padding-left: 3px;
  display: flex;
  align-items: center;
  font-weight: 700;
  border-bottom: 1px solid #8b8b8b;
  background: #eeeeea;
`;

const ActionsGroup = styled.div`
  height: 21px;
  display: flex;
  align-items: center;
  justify-content: space-between;
  padding: 0 7px 0 4px;
  background: linear-gradient(90deg, #8fb0da, #6a94c8);
`;

const ActionsRow = styled.div`
  height: 18px;
  display: flex;
  align-items: center;
  justify-content: space-between;
  padding: 0 5px 0 23px;
`;

const StatusBar = styled.div`
  height: 18px;
  display: flex;
  justify-content: flex-end;
  border-top: 1px solid #5d6164;
  background: #e9e9e7;
`;

const StatusCell = styled.div<{ $w: number }>`
  width: ${({ $w }) => $w}px;
  border-left: 1px solid #c6c6c4;
`;

function ToolBarIcons() {
  return (
    <svg width="240" height="16" viewBox="0 0 240 16" fill="none">
      <path d="M0 8L5 3.500V6H11V10H5V12.500Z" fill="#2f8fe0" stroke="#1c62a8" strokeWidth=".7" />
      <path d="M28 8L23 3.500V6H17V10H23V12.500Z" fill="#6b7075" stroke="#43474b" strokeWidth=".7" />
      <path d="M34.500 2V14" stroke="#4f5b69" />
      <path d="M41 5H45L46 6H51V13H41Z" fill="#f1c75a" stroke="#94721f" strokeWidth=".8" />
      <path d="M44 9L48 3L50 7" stroke="#2c9a32" strokeWidth="1.400" />
      <rect x="56.500" y="1.500" width="15" height="13" rx="1.500" fill="#c9d4e3" stroke="#444c57" strokeWidth="1.300" />
      <path d="M58.500 4.500H69.500V12.500H58.500ZM58.500 6.500H69.500M62.500 7V12.500" fill="#fff" stroke="#5a6168" />
      <path d="M59.500 9H61.500M59.500 11H61.500M66 9H68M66 11H68" stroke="#333" />
      <path d="M74.500 2V14" stroke="#4f5b69" />
      <rect x="82" y="2.500" width="10" height="11" fill="#2449b4" stroke="#152b70" strokeWidth=".7" />
      <path d="M85 6C85 3.500 89.500 3.500 89.500 6C89.500 7.500 87.300 7.500 87.300 9.500M87.300 10.800V12.300" stroke="#fff" strokeWidth="1.500" />
      <rect x="97.500" y="1.500" width="15" height="13" rx="1.500" fill="#c9d4e3" stroke="#444c57" strokeWidth="1.300" />
      <path d="M99.500 4.500H110.500V12.500H99.500ZM99.500 6.500H110.500M106.500 7V12.500" fill="#fff" stroke="#5a6168" />
      <path d="M107.500 9H109.500M107.500 11H109.500" stroke="#333" />
      <path d="M103 7.500L105.500 9.500L103 11.500Z" fill="#1f9a2d" />
      <path d="M116.500 2V14" stroke="#4f5b69" />
      <path d="M124 2.500H130L133 5V13.500H124Z" fill="#fff" stroke="#222" />
      <path d="M126.500 8C127 5.500 130 5.500 130.500 7M130.500 8.500C130 11 127 11 126.500 9.500M130.500 5.500V7.500H128.500M126.500 11V9H128.500" stroke="#1e7e26" />
      <path d="M140.500 3.500L149.500 13M149.500 3.500L140.500 13" stroke="#1c1c1c" strokeWidth="1.500" />
      <path d="M158 6H165V13.500H158Z" fill="#9da1a4" stroke="#1f1f1f" />
      <path d="M159 5L162 2.500H168V6L165 7Z" fill="#55595c" stroke="#1f1f1f" />
      <path d="M159.500 8.500H163.500M159.500 11H163.500" stroke="#1f1f1f" />
      <path d="M175 13V6H178L179 7H183V9M175 13L178 9H186L183 13ZM181 4L184 3L186 5" fill="#d9c750" stroke="#1d1d10" />
      <rect x="192.500" y="3.500" width="9" height="9.500" fill="#e8c54c" stroke="#3c3826" />
      <circle cx="197.500" cy="7.500" r="3" fill="#9fe0ef" stroke="#234" />
      <path d="M199.500 9.500L203 13.500" stroke="#1734c8" strokeWidth="1.800" />
      <rect x="210.500" y="3" width="10" height="10" fill="#c9cccb" stroke="#222" />
      <path d="M212 5H214V7H212ZM212 9H214V11H212ZM216 5L219 8M216 8L219 5M216 10L218 11" stroke="#222" strokeWidth="1.100" />
      <path d="M216 12L220 9L222 13Z" fill="#b6c43c" stroke="#444" strokeWidth=".5" />
    </svg>
  );
}

interface IArrowProps {
  kind: 'left' | 'right' | 'up' | 'open' | 'closed';
}

const arrowPaths = {
  left: 'M5 1V7L2 4Z',
  right: 'M2 .5V7.500L5.500 4Z',
  up: 'M0 6L4 2L8 6Z',
  open: 'M6 2V6H2Z',
  closed: 'M2.500 1L6 4L2.500 7Z',
};

function Arrow({ kind }: IArrowProps) {
  const hollow = kind === 'closed';
  return (
    <svg width="8" height="8" viewBox="0 0 8 8">
      <path d={arrowPaths[kind]} fill={hollow ? '#fff' : '#111'} stroke={hollow ? '#8a8a8a' : 'none'} strokeWidth=".9" />
    </svg>
  );
}

function Grip() {
  return (
    <svg width="7" height="5" viewBox="0 0 7 5"><path d="M1 0V5M3.500 0V5M6 0V5" stroke="#555" /></svg>
  );
}

interface ITreeNode {
  name: string;
  w: number;
  indent: number;
  arrow?: 'open' | 'closed';
  icon: React.ReactElement;
  selected?: boolean;
}

const tree: ITreeNode[] = [
  { name: 'System Tools', w: 53, indent: 5, arrow: 'open', icon: <ToolsIcon /> },
  { name: 'Task Scheduler', w: 60, indent: 20, arrow: 'closed', icon: <ClockIcon /> },
  { name: 'Event Viewer', w: 51, indent: 20, arrow: 'closed', icon: <EventIcon /> },
  { name: 'Shared Folders', w: 59, indent: 20, arrow: 'closed', icon: <SharedIcon /> },
  { name: 'Local Users and Groups', w: 94, indent: 20, arrow: 'closed', icon: <UsersIcon /> },
  { name: 'Performance', w: 52, indent: 20, arrow: 'closed', icon: <PerfIcon /> },
  { name: 'Device Manager', w: 65, indent: 20, icon: <DeviceIcon /> },
  { name: 'Storage', w: 31, indent: 5, arrow: 'open', icon: <StorageIcon /> },
  { name: 'Disk Management', w: 73, indent: 20, icon: <DiskMgmtIcon />, selected: true },
  { name: 'Services and Applications', w: 102, indent: 5, arrow: 'closed', icon: <ServicesIcon /> },
];

const heads: [string, number][] = [
  ['Volume', 31], ['Layout', 27], ['Type', 20], ['File System', 44], ['Status', 24],
  ['Capacity', 35], ['Free Space', 42], ['% Free', 27], ['Fault Tole', 38],
];

const volumes: [string, number][][] = [
  [['(C:)', 14], ['Simple', 26], ['Basic', 20], ['NTFS', 22], ['Healthy (System, Boot, Page File, Active, Primary Partition)', 232], ['21.00 GB', 35], ['7.25 GB', 30], ['35 %', 19], ['No', 11]],
  [['(D:)', 14], ['Simple', 26], ['Basic', 20], ['NTFS', 22], ['Healthy (Logical Drive)', 90], ['8.81 GB', 30], ['6.39 GB', 30], ['73 %', 19], ['No', 11]],
  [['Ne...', 18], ['Simple', 26], ['Basic', 20], ['NTFS', 22], ['Healthy (Primary Partition)', 106], ['931.51 ...', 35], ['931.39 GB', 39], ['100 %', 24], ['No', 11]],
];

function ManagementShot() {
  return (
    <Win>
      <TitleBar>
        <ConsoleIcon />
        <Fit w={97}>Computer Management</Fit>
        <WinButtons>
          <WinButton><svg width="10" height="5" viewBox="0 0 10 5"><rect x=".5" y=".5" width="9" height="4" fill="#fff" stroke="#3a4048" /></svg></WinButton>
          <WinButton><svg width="10" height="7" viewBox="0 0 10 7"><rect x="1" y=".5" width="8" height="6" fill="#fff" stroke="#3a4048" /><rect x="3.500" y="2.500" width="3" height="2" fill="none" stroke="#3a4048" /></svg></WinButton>
          <WinButton><svg width="10" height="8" viewBox="0 0 10 8"><path d="M2 1L8 7M8 1L2 7" stroke="#333a44" strokeWidth="3" /><path d="M2 1L8 7M8 1L2 7" stroke="#fff" strokeWidth="1.200" /></svg></WinButton>
        </WinButtons>
      </TitleBar>
      <MenuBar>
        <MenuName $w={25}><Fit w={13}>File</Fit></MenuName>
        <MenuName $w={39}><Fit w={26}>Action</Fit></MenuName>
        <MenuName $w={31}><Fit w={19}>View</Fit></MenuName>
        <MenuName $w={30}><Fit w={18}>Help</Fit></MenuName>
      </MenuBar>
      <ToolBar><ToolBarIcons /></ToolBar>
      <Panes>
        <TreePane>
          <TreeRow $indent={2}>
            <ConsoleIcon />
            <TreeText><Fit w={121}>Computer Management (Local</Fit></TreeText>
          </TreeRow>
          {tree.map((node) => (
            <TreeRow key={node.name} $indent={node.indent}>
              <Twisty>{node.arrow && <Arrow kind={node.arrow} />}</Twisty>
              {node.icon}
              <TreeText $selected={node.selected}><Fit w={node.w}>{node.name}</Fit></TreeText>
            </TreeRow>
          ))}
          <TreeFoot>
            <Arrow kind="left" />
            <Thumb $w={108}><Grip /></Thumb>
            <ScrollEnd><Arrow kind="right" /></ScrollEnd>
          </TreeFoot>
        </TreePane>
        <MiddlePane>
          <Table>
            <HeadRow>
              {heads.map(([name, w]) => <HeadCell key={name}><Fit w={w}>{name}</Fit></HeadCell>)}
            </HeadRow>
            {volumes.map((cells) => (
              <Row key={cells[0][0]}>
                {cells.map(([text, w], i) => (
                  <Cell key={heads[i][0]} $pad={i === 0 ? 2 : 5}>
                    {i === 0 && <VolumeIcon />}
                    <Fit w={w}>{text}</Fit>
                  </Cell>
                ))}
              </Row>
            ))}
          </Table>
          <TableScroll>
            <Arrow kind="left" />
            <Thumb $w={487}><Grip /></Thumb>
            <ScrollEnd><Arrow kind="right" /></ScrollEnd>
          </TableScroll>
          <Divider />
          <Disks>
            <Disk>
              <DiskLabel>
                <DiskName><DiskIcon /><Fit w={26}>Disk 0</Fit></DiskName>
                <div><Fit w={20}>Basic</Fit></div>
                <div><Fit w={34}>29.82 GB</Fit></div>
                <div><Fit w={26}>Online</Fit></div>
              </DiskLabel>
              <Strip $w={376}>
                <Partition $w={193} $color="#000040">
                  <PartitionBody>
                    <b>{'\u00a0'}<Fit w={14}>(C:)</Fit></b>
                    <div><Fit w={57}>21.00 GB NTFS</Fit></div>
                    <div><Fit w={184}>Healthy (System, Boot, Page File, Active, Prim:</Fit></div>
                  </PartitionBody>
                </Partition>
                <Partition $w={177} $color="#0000ff" $logical>
                  <PartitionBody>
                    <b>{'\u00a0'}<Fit w={14}>(D:)</Fit></b>
                    <div><Fit w={53}>8.81 GB NTFS</Fit></div>
                    <div><Fit w={90}>Healthy (Logical Drive)</Fit></div>
                  </PartitionBody>
                </Partition>
              </Strip>
            </Disk>
            <Disk>
              <DiskLabel>
                <DiskName><DiskIcon /><Fit w={26}>Disk 1</Fit></DiskName>
                <div><Fit w={20}>Basic</Fit></div>
                <div><Fit w={38}>931.51 GB</Fit></div>
                <div><Fit w={26}>Online</Fit></div>
              </DiskLabel>
              <Strip>
                <Partition $w={496} $color="#000040">
                  <PartitionBody>
                    <b><Fit w={72}>New Volume  (E:)</Fit></b>
                    <div><Fit w={62}>931.51 GB NTFS</Fit></div>
                    <div><Fit w={106}>Healthy (Primary Partition)</Fit></div>
                  </PartitionBody>
                </Partition>
              </Strip>
            </Disk>
          </Disks>
          <Legend>
            <LegendItem $color="#000"><Fit w={47}>Unallocated</Fit></LegendItem>
            <LegendItem $color="#000040"><Fit w={66.5}>Primary partition</Fit></LegendItem>
            <LegendItem $color="#004a00"><Fit w={71.5}>Extended partition</Fit></LegendItem>
            <LegendItem $color="#00ff00"><Fit w={41}>Free space</Fit></LegendItem>
            <LegendItem $color="#0000ff"><Fit w={50}>Logical drive</Fit></LegendItem>
          </Legend>
        </MiddlePane>
        <ActionsPane>
          <ActionsHead><Fit w={31}>Actions</Fit></ActionsHead>
          <ActionsGroup><Fit w={73}>Disk Management</Fit><Arrow kind="up" /></ActionsGroup>
          <ActionsRow><Fit w={54}>More Actions</Fit><Arrow kind="right" /></ActionsRow>
        </ActionsPane>
      </Panes>
      <StatusBar>
        <StatusCell $w={100} />
        <StatusCell $w={64} />
        <StatusCell $w={2} />
      </StatusBar>
      <Marker $x={7} $y={166} $w={138} $h={37} />
    </Win>
  );
}

function App() {
  return (
    <Page>
      <GlobalStyle />
      <HeaderRule />
      <StartMenuShot />
      <ManagementShot />
      <FooterRule />
    </Page>
  );
}

export default App;
